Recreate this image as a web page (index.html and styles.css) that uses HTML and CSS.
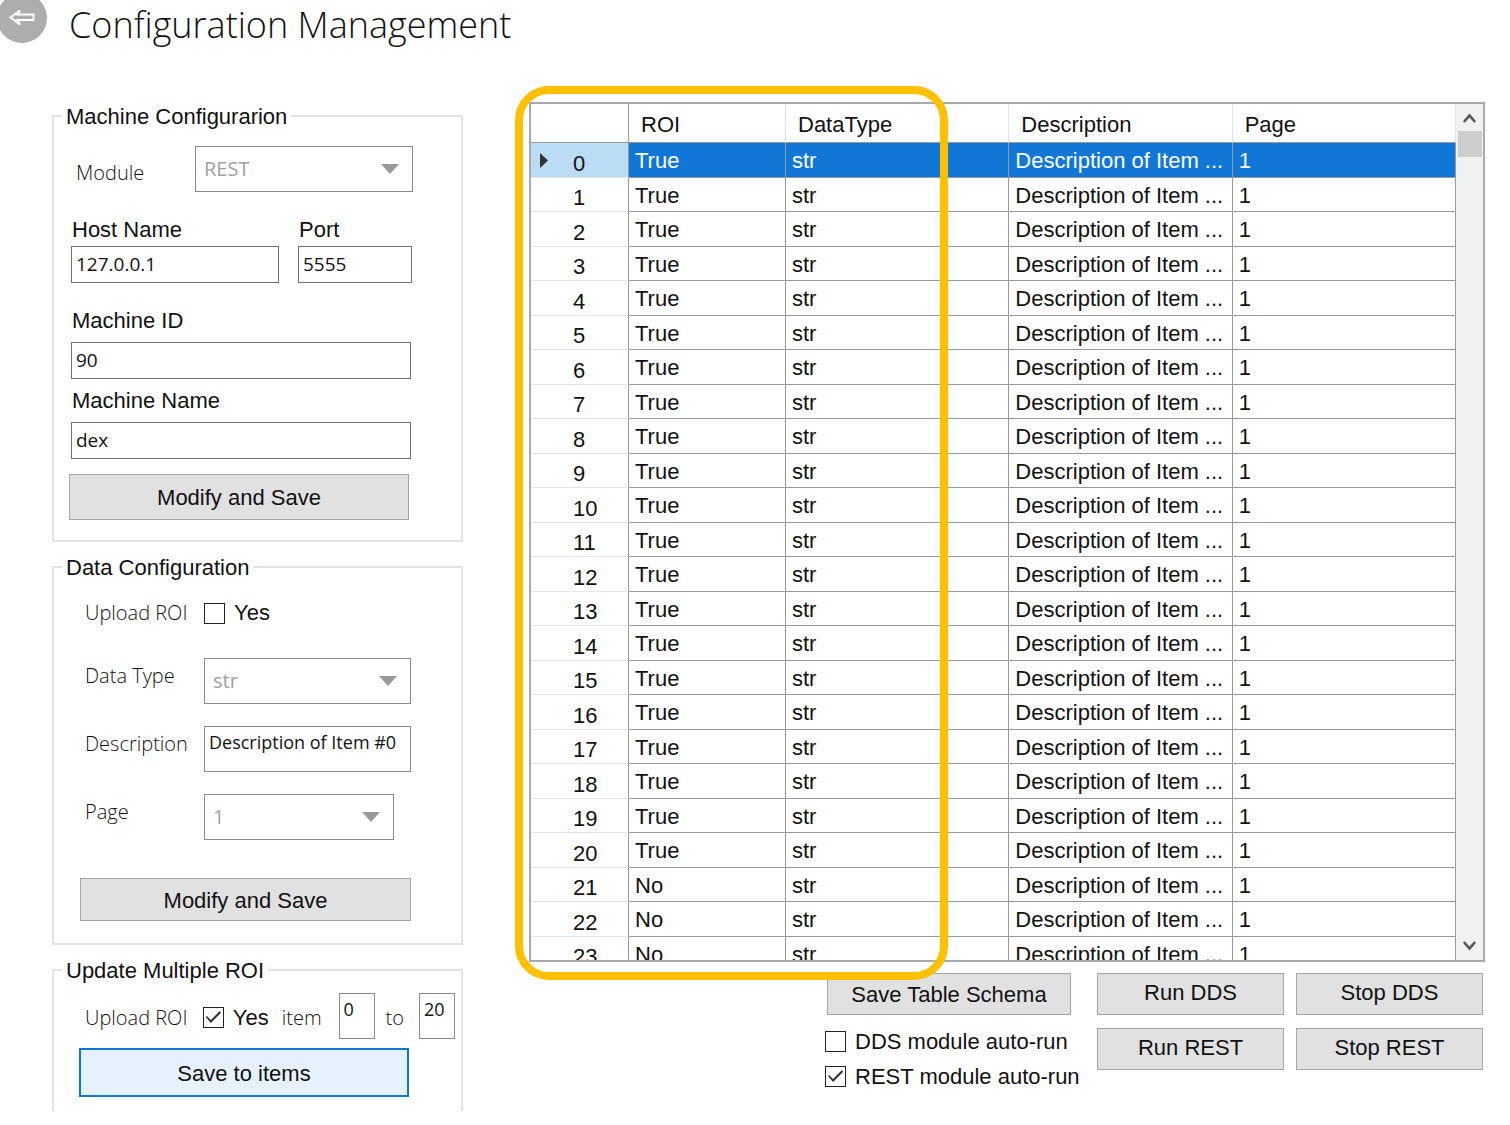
FILE: index.html
```html
<!DOCTYPE html>
<html lang="en">
<head>
<meta charset="utf-8">
<title>Configuration Management</title>
<link rel="stylesheet" href="styles.css">
</head>
<body>
<header class="header">
  <button class="back" type="button" aria-label="Back">
    <svg width="50" height="50" viewBox="0 0 50 50" fill="none" stroke="#fff" stroke-width="2"><path d="M23 17.500L13.500 24.500L23 31.500L20.500 27H36.500V21.500H20.500Z" stroke-linejoin="miter"/></svg>
  </button>
  <h1 class="title">Configuration Management</h1>
</header>
<main class="main">
  <form class="sidebar">
    <fieldset class="group">
      <legend class="legend">Machine Configurarion</legend>
      <div class="machine">
        <div class="module-row">
          <label class="light" for="module">Module</label>
          <span class="combo"><select id="module" disabled><option>REST</option></select></span>
        </div>
        <div class="endpoint">
          <div class="field tight"><label for="host">Host Name</label><input id="host" type="text" value="127.0.0.1"></div>
          <div class="field tight"><label for="port">Port</label><input id="port" type="text" value="5555"></div>
        </div>
        <div class="field"><label for="machine-id">Machine ID</label><input id="machine-id" type="text" value="90"></div>
        <div class="field"><label for="machine-name">Machine Name</label><input id="machine-name" type="text" value="dex"></div>
        <button class="btn save-machine" type="button">Modify and Save</button>
      </div>
    </fieldset>
    <fieldset class="group">
      <legend class="legend">Data Configuration</legend>
      <div class="data">
        <div class="roi-row">
          <span class="light roi-name">Upload ROI</span>
          <label class="check"><input type="checkbox">Yes</label>
        </div>
        <div class="data-row">
          <label class="light" for="data-type">Data Type</label>
          <span class="combo"><select id="data-type" disabled><option>str</option></select></span>
        </div>
        <div class="data-row">
          <label class="light" for="description">Description</label>
          <textarea id="description">Description of Item #0</textarea>
        </div>
        <div class="data-row short">
          <label class="light" for="page">Page</label>
          <span class="combo"><select id="page" disabled><option>1</option></select></span>
        </div>
        <button class="btn save-data" type="button">Modify and Save</button>
      </div>
    </fieldset>
    <fieldset class="group open">
      <legend class="legend">Update Multiple ROI</legend>
      <div class="multi">
        <div class="roi-row range">
          <span class="light roi-name">Upload ROI</span>
          <label class="check"><input type="checkbox" checked>Yes</label>
          <label class="light item" for="from">item</label>
          <textarea id="from">0</textarea>
          <label class="light to" for="until">to</label>
          <textarea id="until">20</textarea>
        </div>
        <button class="btn active save-items" type="button">Save to items</button>
      </div>
    </fieldset>
  </form>
  <section class="content">
    <div class="grid">
      <div class="viewport">
        <table class="table">
          <colgroup><col class="col-index"><col class="col-roi"><col><col><col></colgroup>
          <thead><tr><th></th><th>ROI</th><th>DataType</th><th>Description</th><th>Page</th></tr></thead>
          <tbody>
            <tr class="selected"><th><span class="marker"></span>0</th><td>True</td><td>str</td><td>Description of Item ...</td><td>1</td></tr>
            <tr><th>1</th><td>True</td><td>str</td><td>Description of Item ...</td><td>1</td></tr>
            <tr><th>2</th><td>True</td><td>str</td><td>Description of Item ...</td><td>1</td></tr>
            <tr><th>3</th><td>True</td><td>str</td><td>Description of Item ...</td><td>1</td></tr>
            <tr><th>4</th><td>True</td><td>str</td><td>Description of Item ...</td><td>1</td></tr>
            <tr><th>5</th><td>True</td><td>str</td><td>Description of Item ...</td><td>1</td></tr>
            <tr><th>6</th><td>True</td><td>str</td><td>Description of Item ...</td><td>1</td></tr>
            <tr><th>7</th><td>True</td><td>str</td><td>Description of Item ...</td><td>1</td></tr>
            <tr><th>8</th><td>True</td><td>str</td><td>Description of Item ...</td><td>1</td></tr>
            <tr><th>9</th><td>True</td><td>str</td><td>Description of Item ...</td><td>1</td></tr>
            <tr><th>10</th><td>True</td><td>str</td><td>Description of Item ...</td><td>1</td></tr>
            <tr><th>11</th><td>True</td><td>str</td><td>Description of Item ...</td><td>1</td></tr>
            <tr><th>12</th><td>True</td><td>str</td><td>Description of Item ...</td><td>1</td></tr>
            <tr><th>13</th><td>True</td><td>str</td><td>Description of Item ...</td><td>1</td></tr>
            <tr><th>14</th><td>True</td><td>str</td><td>Description of Item ...</td><td>1</td></tr>
            <tr><th>15</th><td>True</td><td>str</td><td>Description of Item ...</td><td>1</td></tr>
            <tr><th>16</th><td>True</td><td>str</td><td>Description of Item ...</td><td>1</td></tr>
            <tr><th>17</th><td>True</td><td>str</td><td>Description of Item ...</td><td>1</td></tr>
            <tr><th>18</th><td>True</td><td>str</td><td>Description of Item ...</td><td>1</td></tr>
            <tr><th>19</th><td>True</td><td>str</td><td>Description of Item ...</td><td>1</td></tr>
            <tr><th>20</th><td>True</td><td>str</td><td>Description of Item ...</td><td>1</td></tr>
            <tr><th>21</th><td>No</td><td>str</td><td>Description of Item ...</td><td>1</td></tr>
            <tr><th>22</th><td>No</td><td>str</td><td>Description of Item ...</td><td>1</td></tr>
            <tr><th>23</th><td>No</td><td>str</td><td>Description of Item ...</td><td>1</td></tr>
          </tbody>
        </table>
      </div>
      <div class="scrollbar">
        <button type="button" aria-label="Scroll up"><svg width="13" height="11" viewBox="0 0 13 11"><path d="M0.500 8.500L6.500 1.500L12.500 8.500V10.500L11 10.500L6.500 5.500L2 10.500L0.500 10.500Z" fill="#555"/></svg></button>
        <div class="thumb"></div>
        <button type="button" class="down" aria-label="Scroll down"><svg width="13" height="11" viewBox="0 0 13 11"><path d="M0.500 2.500L6.500 9.500L12.500 2.500V0.500L11 0.500L6.500 5.500L2 0.500L0.500 0.500Z" fill="#555"/></svg></button>
      </div>
    </div>
    <div class="actions">
      <div class="schema">
        <button class="btn" type="button">Save Table Schema</button>
        <label class="check"><input type="checkbox">DDS module auto-run</label>
        <label class="check"><input type="checkbox" checked>REST module auto-run</label>
      </div>
      <div class="services">
        <button class="btn" type="button">Run DDS</button>
        <button class="btn" type="button">Stop DDS</button>
        <button class="btn" type="button">Run REST</button>
        <button class="btn" type="button">Stop REST</button>
      </div>
    </div>
    <div class="highlight"></div>
  </section>
</main>
</body>
</html>
```
FILE: styles.css
```css
* { box-sizing: border-box; }

body {
  margin: 0;
  background: #fff;
  color: #111;
  font: 22px/26px "Liberation Sans", Arial, sans-serif;
}

button, input, select, textarea { font: inherit; color: inherit; margin: 0; }

/* Header */
.header { display: flex; align-items: flex-start; height: 86px; overflow: hidden; }
.back {
  flex: none;
  width: 50px;
  height: 50px;
  margin: -7px 0 0 -3px;
  padding: 0;
  border: 0;
  border-radius: 50%;
  background: #adadad;
}
.back svg { display: block; }
.title { margin: 0 0 0 22px; font: 300 36px/50px "Open Sans", sans-serif; color: #111; }

/* Page columns */
.main {
  display: grid;
  grid-template-columns: 411px minmax(0, 1fr);
  column-gap: 66px;
  align-items: start;
  padding: 16px 25px 15px 52px;
}
.sidebar { display: flex; flex-direction: column; gap: 12px; margin-top: 1px; }

/* Groups */
.group { min-width: 0; margin: 0; padding: 0; border: 2px solid #e3e3e3; }
.open { border-bottom: 0; }
.legend { height: 26px; margin-left: 8px; padding: 0 4px; line-height: 28px; }
.light { font: 300 20px/36px "Open Sans", sans-serif; color: #111; }

/* Controls */
input[type="text"], textarea, select {
  display: block;
  width: 100%;
  border: 1px solid #707070;
  border-radius: 0;
  background: #fff;
  font: 19px/26px "Open Sans", sans-serif;
}
input[type="text"] { height: 37px; padding: 0 4px 2px; }
textarea { height: 46px; padding: 2px 4px; border-color: #8a8a8a; resize: none; overflow: hidden; white-space: nowrap; font-size: 18px; }
select { appearance: none; height: 46px; padding: 0 8px; border-color: #8a8a8a; color: #a0a0a0; opacity: 1; font-size: 20px; }
.combo { position: relative; display: block; }
.combo::after {
  content: "";
  position: absolute;
  top: 18px;
  right: 14px;
  width: 18px;
  height: 10px;
  background: #999;
  clip-path: polygon(0 0, 100% 0, 50% 100%);
}
.check { display: flex; align-items: center; gap: 9px; }
.check input {
  appearance: none;
  flex: none;
  width: 21px;
  height: 21px;
  padding: 1px;
  border: 1px solid #222;
  background: #fff;
}
.check input:checked::before {
  content: "";
  display: block;
  width: 17px;
  height: 17px;
  background: #333;
  clip-path: polygon(1px 8px, 2px 7px, 6px 11px, 15px 2px, 16px 4px, 6px 14px);
}
.btn { display: block; padding: 2px 0 0; border: 1px solid #a5a5a5; background: #e1e1e1; text-align: center; }
.active { border: 2px solid #0f78d7; background: #e5f1fc; }

/* Machine group */
.machine { padding: 17px 50px 20px 17px; }
.module-row { display: grid; grid-template-columns: 119px 218px; align-items: center; padding: 0 0 24px 5px; }
.module-row .light { padding-top: 8px; }
.endpoint { display: grid; grid-template-columns: 208px 114px; column-gap: 19px; }
.field { display: flex; flex-direction: column; gap: 7px; margin-bottom: 8px; line-height: 28px; }
.endpoint .field { gap: 2px; margin-bottom: 24px; }
.field label { padding-left: 1px; }
.save-machine { width: 340px; height: 46px; margin: 15px 0 0 -2px; }

/* Data group */
.data { padding: 18px 50px 22px 31px; }
.roi-row { display: flex; align-items: center; height: 30px; }
.roi-name { width: 119px; }
.data .roi-row { margin-bottom: 30px; }
.data-row { display: grid; grid-template-columns: 119px 207px; align-items: start; margin-bottom: 22px; }
.short { grid-template-columns: 119px 190px; }
.save-data { width: 331px; height: 43px; margin: 38px 0 0 -5px; }

/* Multiple update group */
.multi { padding: 10px 6px 14px 31px; }
.range { height: 46px; }
.range .light, .range .check { padding-top: 3px; }
.item { margin: 0 17px 0 13px; }
.to { margin: 0 15px 0 11px; }
.range textarea { flex: none; width: 36px; }
.save-items { width: 330px; height: 49px; margin: 9px 0 0 -6px; }

/* Data table */
.content { position: relative; min-width: 0; }
.grid { display: flex; height: 860px; border: 2px solid #a8a9ab; overflow: hidden; }
.viewport { flex: 1; min-width: 0; overflow: hidden; }
.table { width: 100%; table-layout: fixed; border-collapse: separate; border-spacing: 0; }
.col-index { width: 98px; }
.col-roi { width: 157px; }
.table th, .table td {
  padding: 2px 0 0 6px;
  border: solid #999;
  border-width: 0 1px 1px 0;
  font-weight: 400;
  text-align: left;
  white-space: nowrap;
  overflow: hidden;
  line-height: 30px;
}
.table thead th { height: 39px; padding: 4px 0 0 12px; border-right-color: #e2e2e2; }
.table thead th:first-child { border-right-color: #999; }
.table tbody tr { height: 35px; }
.table tbody tr:nth-child(even) { height: 34px; }
.table tbody th { position: relative; padding: 6px 0 0 42px; line-height: 27px; border-bottom-color: #e5e5e5; }
.selected td { background: #1177d7; color: #fff; }
.selected th { background: #bbdcf5; }
.marker {
  position: absolute;
  top: 10px;
  left: 9px;
  width: 8px;
  height: 15px;
  background: #333;
  clip-path: polygon(0 0, 100% 50%, 0 100%);
}

/* Scroll bar */
.scrollbar { flex: none; display: flex; flex-direction: column; width: 27px; background: #f0f1f1; }
.scrollbar button { display: grid; place-items: center; height: 27px; padding: 0; border: 0; background: none; }
.thumb { height: 26px; margin: 0 1px 0 2px; background: #cdcdcd; }
.scrollbar .down { margin-top: auto; }

/* Actions */
.actions { display: flex; justify-content: flex-end; gap: 14px; padding: 11px 2px 0 0; }
.schema { width: 258px; white-space: nowrap; }
.schema .btn { width: 244px; height: 42px; margin: 0 0 9px 2px; }
.schema .check { height: 35px; }
.services { display: grid; grid-template-columns: 187px 187px; grid-auto-rows: 42px; gap: 13px 12px; }
.services .btn { padding: 0 0 2px; }

/* Frame over the index, ROI and DataType columns */
.highlight {
  position: absolute;
  top: -16px;
  left: -14px;
  width: 433px;
  height: 894px;
  border: 8px solid #ffc000;
  border-radius: 34px;
  pointer-events: none;
}
```
